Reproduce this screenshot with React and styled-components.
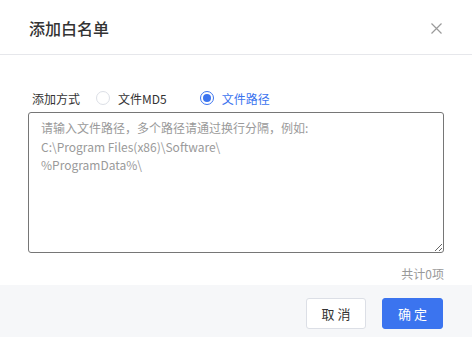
import React from "react";
import styled, { createGlobalStyle } from "styled-components";

const GlobalStyle = createGlobalStyle`
  html, body {
    margin: 0;
    padding: 0;
    background: #ffffff;
  }
  body {
    font-family: "Noto Sans CJK SC", "Noto Sans", sans-serif;
  }
  * {
    box-sizing: border-box;
  }
`;

const PLACEHOLDER =
  "请输入文件路径，多个路径请通过换行分隔，例如:\nC:\\Program Files(x86)\\Software\\\n%ProgramData%\\";

export default function App() {

  const [mode, setMode] = React.useState("path");
  const [value, setValue] = React.useState("");

  const count = value.split("\n").filter(line => line.trim()).length;

  return (
    <Dialog>
      <GlobalStyle />
      <Header>
        <Title>添加白名单</Title>
        <Close aria-label="close">
          <svg width="11" height="11" viewBox="0 0 11 11">
            <path d="M0.5 0.5 L10.5 10.5 M10.5 0.5 L0.5 10.5" stroke="#9a9a9a" strokeWidth="1.2" fill="none" />
          </svg>
        </Close>
      </Header>

      <Body>
        <Row>
          <Label>添加方式</Label>
          <Option onClick={() => setMode("md5")}>
            <Radio checked={mode === "md5"} />
            <OptionText checked={mode === "md5"}>文件MD5</OptionText>
          </Option>
          <Option onClick={() => setMode("path")}>
            <Radio checked={mode === "path"} />
            <OptionText checked={mode === "path"}>文件路径</OptionText>
          </Option>
        </Row>

        <Input
          placeholder={PLACEHOLDER}
          value={value}
          onChange={e => setValue(e.target.value)}
        />

        <Count>共计{count}项</Count>
      </Body>

      <Footer>
        <Button>取 消</Button>
        <Button primary>确 定</Button>
      </Footer>
    </Dialog>
  );
};

const Dialog = styled.div`

  width: 472px;
  height: 337px;
  display: flex;
  flex-direction: column;
  background: #ffffff;
  overflow: hidden;
`;

const Header = styled.div`

  height: 55px;
  display: flex;
  align-items: center;
  justify-content: space-between;
  padding: 2px 30px 0 29px;
  border-bottom: 1px solid #e6e7eb;
`;

const Title = styled.h1`

  margin: 0;
  font-size: 16px;
  font-weight: 500;
  color: #333333;
  line-height: 22px;
`;

const Close = styled.button`

  width: 11px;
  height: 11px;
  padding: 0;
  border: none;
  background: none;
  display: flex;
  cursor: pointer;
`;

const Body = styled.div`

  display: flex;
  flex-direction: column;
  padding: 35px 28px 0 28px;
  height: 230px;
`;

const Row = styled.div`

  height: 16px;
  display: flex;
  align-items: center;
  padding-left: 4px;
`;

const Label = styled.span`

  font-size: 12px;
  color: #333333;
  margin-right: 16px;
`;

const Option = styled.label`

  display: flex;
  align-items: center;
  margin-right: 33px;
  cursor: pointer;
`;

const Radio = styled.span`

  width: 14px;
  height: 14px;
  border-radius: 50%;
  border: 1px solid ${props => props.checked ? "#3b74ef" : "#dcdfe6"};
  display: flex;
  align-items: center;
  justify-content: center;
  margin-right: 8px;

  &::after {
    content: "";
    width: 8px;
    height: 8px;
    border-radius: 50%;
    background: #3b74ef;
    display: ${props => props.checked ? "block" : "none"};
  }
`;

const OptionText = styled.span`

  font-size: 12px;
  color: ${props => props.checked ? "#3b74ef" : "#333333"};
`;

const Input = styled.textarea`

  margin-top: 6px;
  width: 416px;
  height: 141px;
  padding: 6px 12px;
  border: 1px solid #767676;
  border-radius: 3px;
  font-family: "Noto Sans CJK SC", "Noto Sans", sans-serif;
  font-size: 12px;
  line-height: 18.5px;
  color: #333333;
  outline: none;

  &::placeholder {
    color: #9a9a9a;
  }
`;

const Count = styled.div`

  margin-top: 12px;
  text-align: right;
  font-size: 12px;
  color: #999999;
  line-height: 17px;
`;

const Footer = styled.div`

  flex: 1;
  display: flex;
  justify-content: flex-end;
  align-items: flex-start;
  gap: 16px;
  padding: 13px 29px 0 0;
  background: #f6f7f9;
`;

const Button = styled.button`

  width: ${props => props.primary ? "61px" : "60px"};
  height: 31px;
  border-radius: 3px;
  border: 1px solid ${props => props.primary ? "#3b74ef" : "#dcdfe6"};
  background: ${props => props.primary ? "#3b74ef" : "#ffffff"};
  color: ${props => props.primary ? "#ffffff" : "#333333"};
  font-family: "Noto Sans CJK SC", "Noto Sans", sans-serif;
  font-size: 13px;
  cursor: pointer;
  padding: 0;
`;
